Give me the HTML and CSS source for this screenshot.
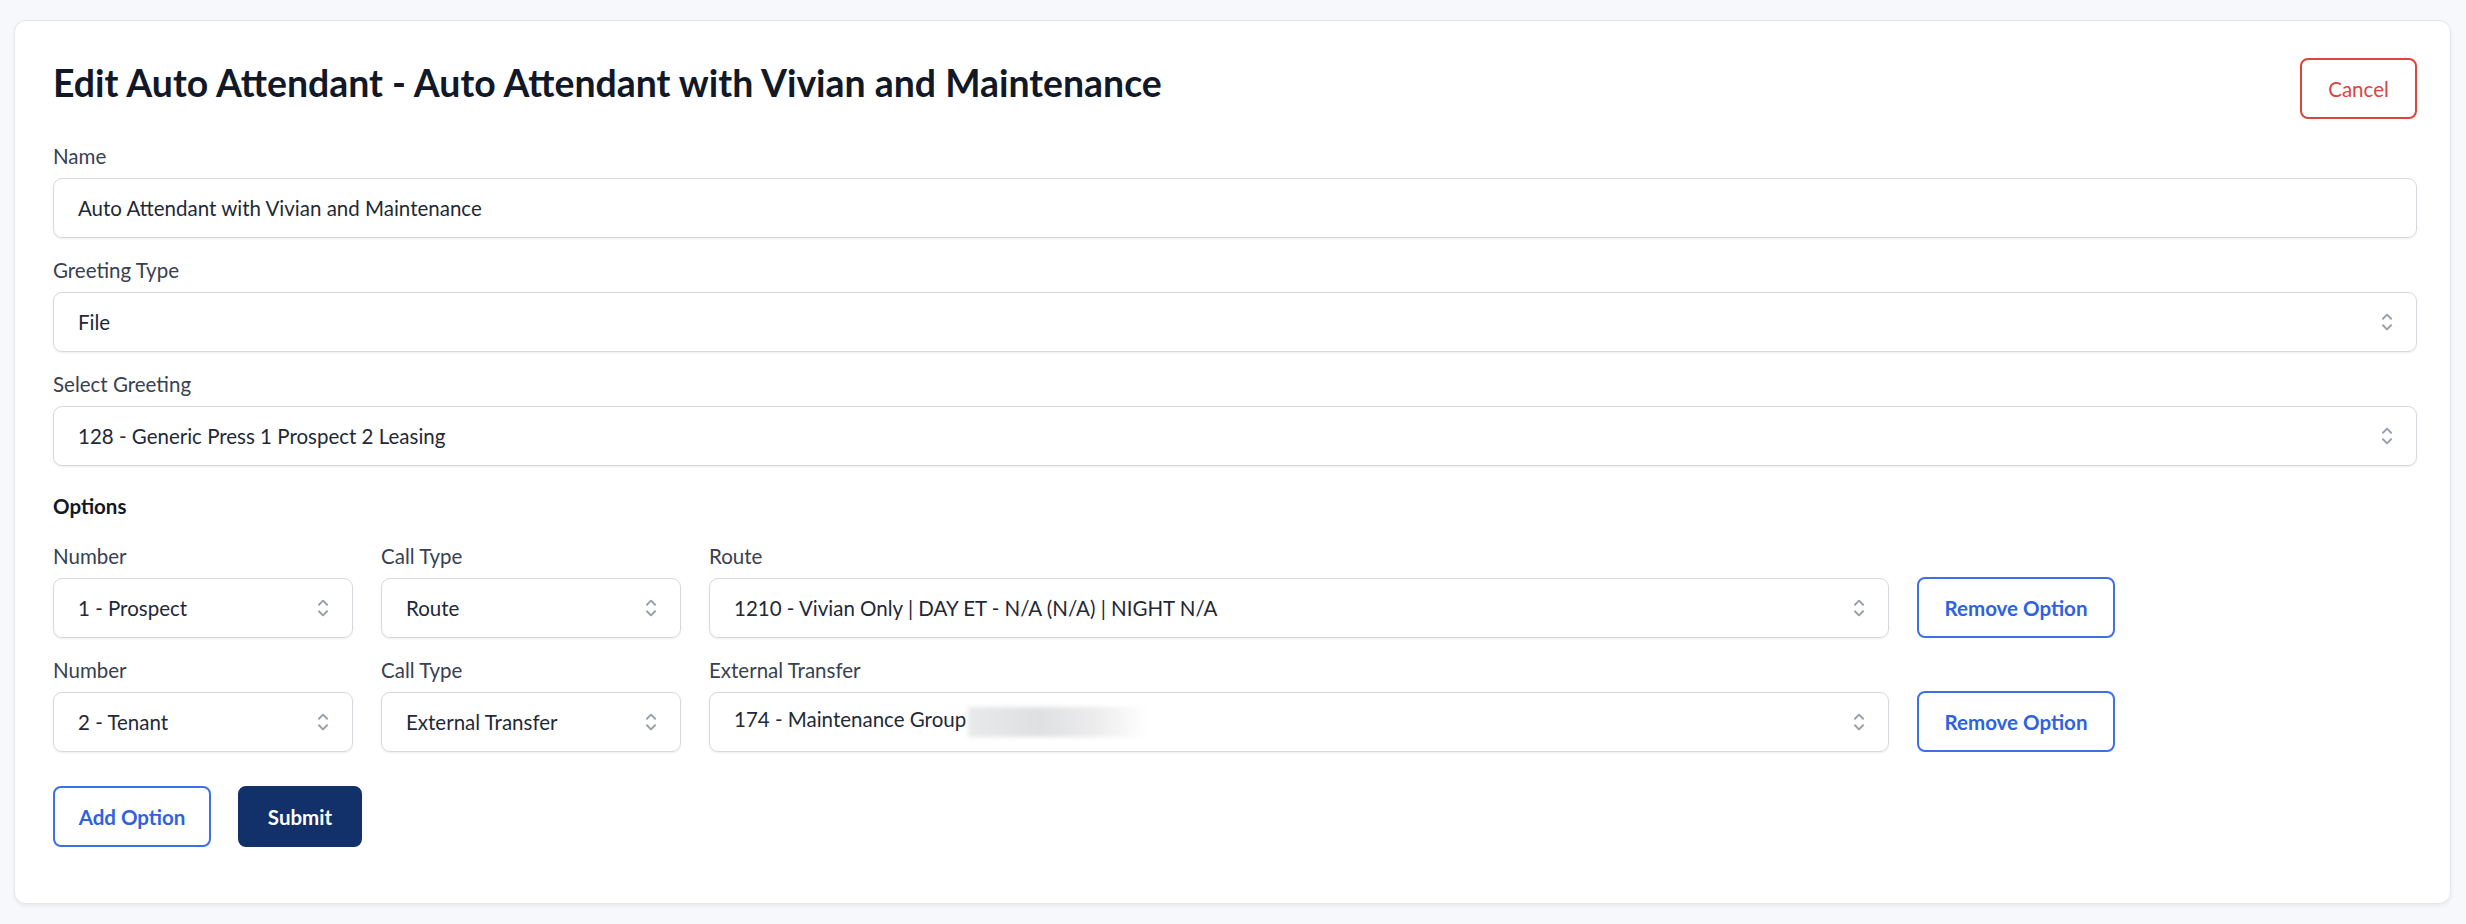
FILE: index.html
```html
<!DOCTYPE html>
<html lang="en">
<head>
    <meta charset="UTF-8">
    <meta name="viewport" content="width=device-width, initial-scale=1.0">
    <title>Edit Auto Attendant</title>
    <link rel="stylesheet" href="styles.css">
</head>
<body>
    <div class="card">
        <div class="card-header">
            <h1>Edit Auto Attendant - Auto Attendant with Vivian and Maintenance</h1>
            <button class="btn btn-cancel">Cancel</button>
        </div>

        <div class="form-group">
            <label>Name</label>
            <div class="input">Auto Attendant with Vivian and Maintenance</div>
        </div>

        <div class="form-group">
            <label>Greeting Type</label>
            <div class="input select">
                <span>File</span>
                <svg class="chevrons" viewBox="0 0 24 24"><path d="M8.25 15L12 18.75 15.75 15m-7.5-6L12 5.25 15.75 9"/></svg>
            </div>
        </div>

        <div class="form-group">
            <label>Select Greeting</label>
            <div class="input select">
                <span>128 - Generic Press 1 Prospect 2 Leasing</span>
                <svg class="chevrons" viewBox="0 0 24 24"><path d="M8.25 15L12 18.75 15.75 15m-7.5-6L12 5.25 15.75 9"/></svg>
            </div>
        </div>

        <h3 class="options-title">Options</h3>

        <!-- option 1 -->
        <div class="option-row">
            <div class="option-col">
                <label>Number</label>
                <div class="input select">
                    <span>1 - Prospect</span>
                    <svg class="chevrons" viewBox="0 0 24 24"><path d="M8.25 15L12 18.75 15.75 15m-7.5-6L12 5.25 15.75 9"/></svg>
                </div>
            </div>
            <div class="option-col">
                <label>Call Type</label>
                <div class="input select">
                    <span>Route</span>
                    <svg class="chevrons" viewBox="0 0 24 24"><path d="M8.25 15L12 18.75 15.75 15m-7.5-6L12 5.25 15.75 9"/></svg>
                </div>
            </div>
            <div class="option-col">
                <label>Route</label>
                <div class="input select">
                    <span>1210 - Vivian Only | DAY ET - N/A (N/A) | NIGHT N/A</span>
                    <svg class="chevrons" viewBox="0 0 24 24"><path d="M8.25 15L12 18.75 15.75 15m-7.5-6L12 5.25 15.75 9"/></svg>
                </div>
            </div>
            <button class="btn btn-outline btn-remove">Remove Option</button>
        </div>

        <!-- option 2 -->
        <div class="option-row">
            <div class="option-col">
                <label>Number</label>
                <div class="input select">
                    <span>2 - Tenant</span>
                    <svg class="chevrons" viewBox="0 0 24 24"><path d="M8.25 15L12 18.75 15.75 15m-7.5-6L12 5.25 15.75 9"/></svg>
                </div>
            </div>
            <div class="option-col">
                <label>Call Type</label>
                <div class="input select">
                    <span>External Transfer</span>
                    <svg class="chevrons" viewBox="0 0 24 24"><path d="M8.25 15L12 18.75 15.75 15m-7.5-6L12 5.25 15.75 9"/></svg>
                </div>
            </div>
            <div class="option-col">
                <label>External Transfer</label>
                <div class="input select">
                    <span>174 - Maintenance Group<i class="redacted"></i></span>
                    <svg class="chevrons" viewBox="0 0 24 24"><path d="M8.25 15L12 18.75 15.75 15m-7.5-6L12 5.25 15.75 9"/></svg>
                </div>
            </div>
            <button class="btn btn-outline btn-remove">Remove Option</button>
        </div>

        <div class="actions">
            <button class="btn btn-outline btn-add">Add Option</button>
            <button class="btn btn-primary">Submit</button>
        </div>
    </div>
</body>
</html>
```

FILE: styles.css
```css
body {
    margin: 0;
    padding: 20px 15px 18px 14px;
    background-color: #f7f8fb;
    font-family: Lato, "Noto Sans", sans-serif;
    color: #1f2937;
}
.card {
    background: #fff;
    border: 1px solid #e4e6eb;
    border-radius: 12px;
    box-shadow: 0 2px 4px rgba(0, 0, 0, 0.06);
    padding: 37px 33px 56px 38px;
}
.card-header {
    display: flex;
    justify-content: space-between;
    align-items: flex-start;
    margin-bottom: 23px;
}
h1 {
    margin: 0;
    font-size: 37.4px;
    line-height: 50px;
    font-weight: 700;
    color: #111827;
}
label {
    display: block;
    font-size: 20.5px;
    line-height: 28px;
    color: #374151;
    margin-bottom: 8px;
}
.form-group {
    margin-bottom: 18px;
}
.input {
    box-sizing: border-box;
    height: 60px;
    border: 1px solid #d6d9de;
    border-radius: 9px;
    box-shadow: 0 1px 2px rgba(0, 0, 0, 0.08);
    padding: 0 24px;
    display: flex;
    align-items: center;
    font-size: 20.5px;
    color: #1f2937;
}
.select {
    justify-content: space-between;
    padding-right: 16px;
}
.chevrons {
    width: 26px;
    height: 26px;
    flex: none;
    fill: none;
    stroke: #979ea8;
    stroke-width: 1.7;
    stroke-linecap: round;
    stroke-linejoin: round;
}
.options-title {
    margin: 26px 0 22px;
    font-size: 20.5px;
    line-height: 28px;
    font-weight: 700;
    color: #111827;
}
.option-row {
    display: grid;
    grid-template-columns: 300px 300px 1180px 198px;
    column-gap: 28px;
    align-items: end;
    margin-bottom: 18px;
}
.redacted {
    display: inline-block;
    width: 180px;
    height: 30px;
    vertical-align: middle;
    margin-left: 2px;
    background: linear-gradient(to right, #e8e9ea 0%, #dfe0e2 40%, #ececed 70%, rgba(255, 255, 255, 0) 100%);
    filter: blur(2px);
}
.btn {
    box-sizing: border-box;
    height: 61px;
    padding: 0;
    border-radius: 8px;
    font-family: Lato, "Noto Sans", sans-serif;
    font-size: 20.5px;
    font-weight: 700;
    text-align: center;
    cursor: pointer;
    background: #fff;
}
.btn-cancel {
    width: 117px;
    border: 2px solid #d9463f;
    color: #d9463f;
    font-weight: 400;
}
.btn-outline {
    border: 2px solid #3d6fe6;
    color: #2f62e0;
}
.btn-remove {
    width: 198px;
}
.btn-add {
    width: 158px;
}
.btn-primary {
    width: 124px;
    background-color: #12306a;
    border: 2px solid #12306a;
    color: #fff;
}
.actions {
    display: flex;
    gap: 27px;
    margin-top: 34px;
}
```
